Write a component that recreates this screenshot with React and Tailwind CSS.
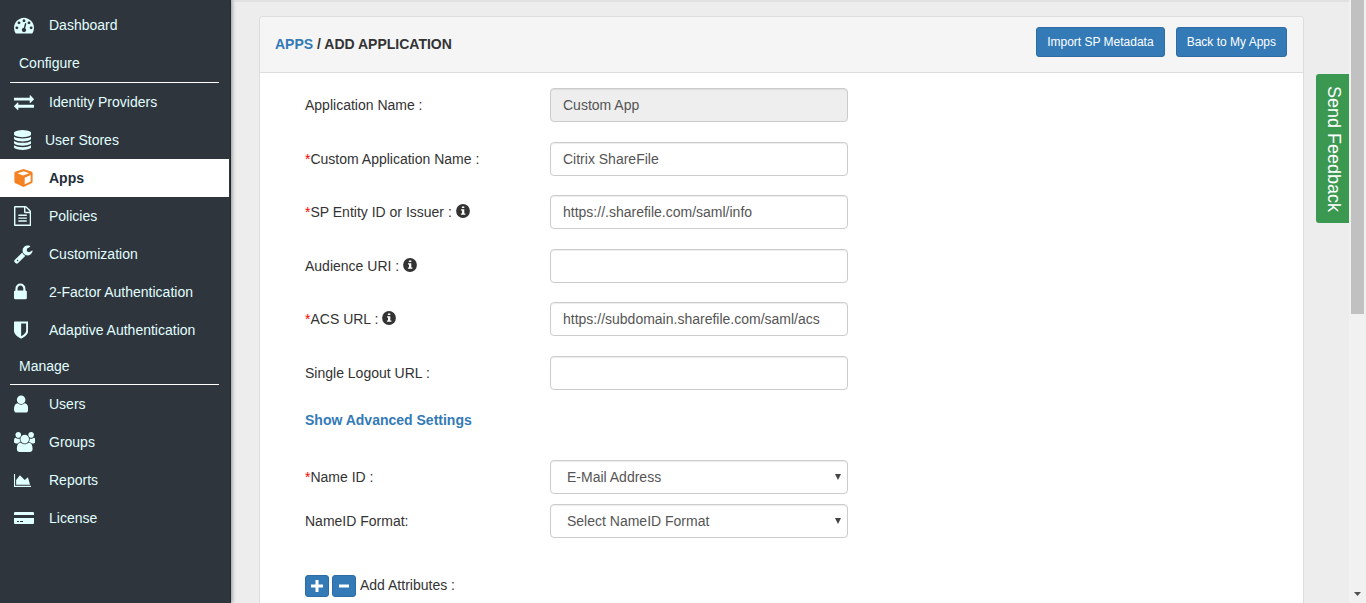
import React, { useState } from 'react';

const ICONS = {
    dashboard: {
        viewBox: '0 0 1792 1792',
        size: 'h-5',
        d: 'M384 1152q0-53-37.5-90.5t-90.5-37.5-90.5 37.5-37.5 90.5 37.5 90.5 90.5 37.5 90.5-37.5 37.5-90.5zm192-448q0-53-37.5-90.5t-90.5-37.5-90.5 37.5-37.5 90.5 37.5 90.5 90.5 37.5 90.5-37.5 37.5-90.5zm428 481l101-382q6-26-7.5-48.5t-38.5-29.5-48 6.5-30 39.5l-101 382q-60 5-107 43.5t-63 98.5q-20 77 20 146t117 89 146-20 89-117q16-60-6-117t-72-91zm660-33q0-53-37.5-90.5t-90.5-37.5-90.5 37.5-37.5 90.5 37.5 90.5 90.5 37.5 90.5-37.5 37.5-90.5zm-640-640q0-53-37.5-90.5t-90.5-37.5-90.5 37.5-37.5 90.5 37.5 90.5 90.5 37.5 90.5-37.5 37.5-90.5zm448 192q0-53-37.5-90.5t-90.5-37.5-90.5 37.5-37.5 90.5 37.5 90.5 90.5 37.5 90.5-37.5 37.5-90.5zm320 448q0 261-141 483-19 29-54 29h-1402q-35 0-54-29-141-221-141-483 0-182 71-348t191-286 286-191 348-71 348 71 286 191 191 286 71 348z'
    },
    exchange: {
        viewBox: '0 0 1792 1792',
        size: 'h-5',
        d: 'M1792 1184v192q0 13-9.5 22.5t-22.5 9.5h-1376v192q0 13-9.5 22.5t-22.5 9.5q-12 0-24-10l-319-320q-9-9-9-22 0-14 9-23l320-320q9-9 23-9 13 0 22.5 9.5t9.5 22.5v192h1376q13 0 22.5 9.5t9.5 22.5zm0-544q0 14-9 23l-320 320q-9 9-23 9-13 0-22.5-9.5t-9.5-22.5v-192h-1376q-13 0-22.5-9.5t-9.5-22.5v-192q0-13 9.5-22.5t22.5-9.5h1376v-192q0-14 9-23t23-9q12 0 24 10l319 319q9 9 9 23z'
    },
    database: {
        viewBox: '128 0 1536 1792',
        size: 'h-5',
        d: 'M896 768q237 0 443-43t325-127v170q0 69-103 128t-280 93.5-385 34.5-385-34.5-280-93.5-103-128v-170q119 84 325 127t443 43zm0 768q237 0 443-43t325-127v170q0 69-103 128t-280 93.5-385 34.5-385-34.5-280-93.5-103-128v-170q119 84 325 127t443 43zm0-384q237 0 443-43t325-127v170q0 69-103 128t-280 93.5-385 34.5-385-34.5-280-93.5-103-128v-170q119 84 325 127t443 43zm0-1152q208 0 385 34.5t280 93.5 103 128v128q0 69-103 128t-280 93.5-385 34.5-385-34.5-280-93.5-103-128v-128q0-69 103-128t280-93.5 385-34.5z'
    },
    cube: {
        viewBox: '0 0 19 18',
        size: 'h-[18px]',
        d: 'M9.5 0L17.8 2.800Q18.600 3.100 18.600 4V13Q18.600 13.700 18 14L9.500 18L1 14Q.4 13.700 .4 13V4Q.4 3.100 1.200 2.800zM3.500 4.200L9 6.600L15.300 4.200L9.800 2.200zM10.700 8.700V15.200L16.700 12.400V5.900z'
    },
    file: {
        viewBox: '128 0 1536 1792',
        size: 'h-5',
        d: 'M1596 380q28 28 48 76t20 88v1152q0 40-28 68t-68 28h-1344q-40 0-68-28t-28-68v-1600q0-40 28-68t68-28h896q40 0 88 20t76 48zm-444-244v376h376q-10-29-22-41l-313-313q-12-12-41-22zm384 1528v-1024h-416q-40 0-68-28t-28-68v-416h-768v1536h1280zm-1024-864q0-14 9-23t23-9h704q14 0 23 9t9 23v64q0 14-9 23t-23 9h-704q-14 0-23-9t-9-23v-64zm736 224q14 0 23 9t9 23v64q0 14-9 23t-23 9h-704q-14 0-23-9t-9-23v-64q0-14 9-23t23-9h704zm0 256q14 0 23 9t9 23v64q0 14-9 23t-23 9h-704q-14 0-23-9t-9-23v-64q0-14 9-23t23-9h704z'
    },
    wrench: {
        viewBox: '64 0 1664 1792',
        size: 'h-5',
        d: 'M448 1472q0-26-19-45t-45-19-45 19-19 45 19 45 45 19 45-19 19-45zm644-420l-682 682q-37 37-90 37-52 0-91-37l-106-108q-38-36-38-90 0-53 38-91l681-681q39 98 114.5 173.5t173.5 114.5zm634-435q0 39-23 106-47 134-164.5 217.5t-258.5 83.5q-185 0-316.5-131.5t-131.5-316.5 131.5-316.5 316.5-131.5q58 0 121.5 16.5t107.5 46.5q16 11 16 28t-16 28l-293 169v224l193 107q5-3 79-48.5t135.5-81 70.5-35.5q15 0 23.5 10t8.5 25z'
    },
    lock: {
        viewBox: '320 0 1152 1792',
        size: 'h-5',
        d: 'M640 768h512v-192q0-106-75-181t-181-75-181 75-75 181v192zm832 96v576q0 40-28 68t-68 28h-960q-40 0-68-28t-28-68v-576q0-40 28-68t68-28h32v-192q0-184 132-316t316-132 316 132 132 316v192h32q40 0 68 28t28 68z'
    },
    shield: {
        viewBox: '256 0 1280 1792',
        size: 'h-5',
        d: 'M1344 960v-640h-448v1137q119-63 213-137 235-184 235-360zm192-768v768q0 86-33.5 170.5t-83 150-118 127.5-126.5 103-121 77.5-89.5 49.5-42.5 20q-12 6-26 6t-26-6q-16-7-42.5-20t-89.5-49.5-121-77.5-126.5-103-118-127.5-83-150-33.5-170.5v-768q0-26 19-45t45-19h1152q26 0 45 19t19 45z'
    },
    user: {
        viewBox: '256 0 1280 1792',
        size: 'h-5',
        d: 'M1536 1399q0 109-62.5 187t-150.5 78h-854q-88 0-150.5-78t-62.5-187q0-85 8.5-160.5t31.5-152 58.5-131 94-89 134.5-34.5q131 128 313 128t313-128q76 0 134.5 34.5t94 89 58.5 131 31.5 152 8.5 160.5zm-256-887q0 159-112.5 271.5t-271.5 112.5-271.5-112.5-112.5-271.5 112.5-271.5 271.5-112.5 271.5 112.5 112.5 271.5z'
    },
    users: {
        viewBox: '0 0 1920 1792',
        size: 'h-5',
        d: 'M593 896q-162 5-265 128h-134q-82 0-138-40.5t-56-118.5q0-353 124-353 6 0 43.5 21t97.5 42.5 119 21.5q67 0 133-23-5 37-5 66 0 141 81 256zm1071 637q0 120-73 189.5t-194 69.5h-874q-121 0-194-69.5t-73-189.5q0-53 3.5-103.5t14-109 26.5-108.5 43-97.5 62-81 85.5-53.5 111.5-20q10 0 43 21.5t73 48 107 48 135 21.5 135-21.5 107-48 73-48 43-21.5q61 0 111.5 20t85.5 53.5 62 81 43 97.5 26.5 108.5 14 109 3.5 103.5zm-1024-1277q0 106-75 181t-181 75-181-75-75-181 75-181 181-75 181 75 75 181zm704 384q0 159-112.5 271.5t-271.5 112.5-271.5-112.5-112.5-271.5 112.5-271.5 271.5-112.5 271.5 112.5 112.5 271.5zm576 225q0 78-56 118.5t-138 40.5h-134q-103-123-265-128 81-115 81-256 0-29-5-66 66 23 133 23 59 0 119-21.5t97.5-42.5 43.5-21q124 0 124 353zm-128-609q0 106-75 181t-181 75-181-75-75-181 75-181 181-75 181 75 75 181z'
    },
    chart: {
        viewBox: '0 0 2048 1792',
        size: 'h-[15px]',
        d: 'M2048 1536v128h-2048v-1536h128v1408h1920zm-384-1024l256 896h-1664v-576l448-576 576 576z'
    },
    card: {
        viewBox: '0 0 20 12',
        size: 'h-3',
        d: 'M1 0h18q1 0 1 1v2h-20v-2q0-1 1-1zM0 6h20v5q0 1-1 1h-18q-1 0-1-1zM3 9v1h2v-1zM6 9v1h3v-1z'
    }
};

const NAV = [
    { label: 'Dashboard', icon: 'dashboard' },
    { heading: 'Configure', height: 'h-[39px]' },
    { label: 'Identity Providers', icon: 'exchange' },
    { label: 'User Stores', icon: 'database', slot: 'w-[31px]' },
    { label: 'Apps', icon: 'cube', active: true },
    { label: 'Policies', icon: 'file' },
    { label: 'Customization', icon: 'wrench' },
    { label: '2-Factor Authentication', icon: 'lock' },
    { label: 'Adaptive Authentication', icon: 'shield' },
    { heading: 'Manage', height: 'h-9 pb-0.5' },
    { label: 'Users', icon: 'user' },
    { label: 'Groups', icon: 'users' },
    { label: 'Reports', icon: 'chart' },
    { label: 'License', icon: 'card' }
];

const FIELDS = [
    { name: 'appName', label: 'Application Name :', disabled: true },
    { name: 'customName', label: 'Custom Application Name :', required: true },
    { name: 'entityId', label: 'SP Entity ID or Issuer :', required: true, info: true },
    { name: 'audienceUri', label: 'Audience URI :', info: true },
    { name: 'acsUrl', label: 'ACS URL :', required: true, info: true },
    { name: 'logoutUrl', label: 'Single Logout URL :' }
];

function NavIcon({ name }) {
    const icon = ICONS[name];
    return (
        <svg viewBox={icon.viewBox} className={`${icon.size} w-auto`} fill="currentColor" fillRule="evenodd" aria-hidden="true">
            <path d={icon.d} />
        </svg>
    );
}

function InfoIcon() {
    return (
        <svg viewBox="0 0 14 14" className="mb-1 ml-1 inline-block h-3.5 w-3.5 align-middle" aria-hidden="true">
            <circle cx="7" cy="7" r="6.9" fill="#333" />
            <path d="M5.9 2.4h2.4v1.700H5.900zM5 5.300h3.300v4.200h1.100v1.300H4.900V9.500H6V6.600H5z" fill="#fff" />
        </svg>
    );
}

function Sidebar() {
    return (
        <nav className="z-10 w-[231px] shrink-0 border-r border-[#222830] bg-[#2f353d] pt-1.5 shadow-[1px_0_4px_rgba(0,0,0,0.4)]">
            {NAV.map(item => item.heading ? (
                <h2
                    key={item.heading}
                    className={`mr-[11px] ml-2.5 flex items-center border-b border-white pl-[9px] text-sm text-[#e0ffff] ${item.height}`}
                >
                    {item.heading}
                </h2>
            ) : (
                <a
                    key={item.label}
                    href="#"
                    className={`mr-px flex h-[38px] items-center pl-3.5 text-sm ${item.active ? 'bg-white font-bold text-[#222d3a]' : 'text-[#e0ffff]'}`}
                >
                    <span className={`shrink-0 ${item.slot || 'w-[35px]'} ${item.active ? 'text-[#f58220]' : ''}`}>
                        <NavIcon name={item.icon} />
                    </span>
                    {item.label}
                </a>
            ))}
        </nav>
    );
}

function SelectRow({ id, label, required, option }) {
    return (
        <div className="flex items-center">
            <label htmlFor={id} className="w-[245px] shrink-0">
                {required && <span className="text-[#f00]">*</span>}{label}
            </label>
            <div className="relative w-full max-w-[298px]">
                <select
                    id={id}
                    className="h-[34px] w-full appearance-none rounded border border-[#ccc] bg-white px-4 text-[#555] shadow-[inset_0_1px_1px_rgba(0,0,0,0.075)]"
                >
                    <option>{option}</option>
                </select>
                <svg viewBox="0 0 6 6" className="pointer-events-none absolute top-3.5 right-[7px] h-1.5 w-1.5" aria-hidden="true">
                    <path d="M0 0h6l-3 6z" fill="#444" />
                </svg>
            </div>
        </div>
    );
}

function App() {
    const [formData, setFormData] = useState({
        appName: 'Custom App',
        customName: 'Citrix ShareFile',
        entityId: 'https://.sharefile.com/saml/info',
        audienceUri: '',
        acsUrl: 'https://subdomain.sharefile.com/saml/acs',
        logoutUrl: ''
    });

    const handleChange = (e) => {
        setFormData({ ...formData, [e.target.name]: e.target.value });
    };

    return (
        <div className="flex h-screen overflow-hidden bg-[#ededed] font-['Liberation_Sans',Arial,sans-serif] text-sm text-[#333]">
            <Sidebar />

            <main className="min-w-0 flex-1 border-t-2 border-[#e1e1e1] pt-3.5 pr-[45px] pl-7">
                <div className="min-h-full rounded-t border border-b-0 border-[#ddd] bg-white">
                    <div className="flex h-14 items-start justify-between rounded-t border-b border-[#ddd] bg-[#f5f5f5] pt-2.5 pr-4 pl-[15px]">
                        <h1 className="pt-[7px] font-bold">
                            <a href="#" className="text-[#337ab7]">APPS</a> / ADD APPLICATION
                        </h1>
                        <div className="flex gap-[11px] text-xs text-white">
                            <button type="button" className="h-[30px] rounded-[3px] border border-[#2e6da4] bg-[#337ab7] px-2.5">
                                Import SP Metadata
                            </button>
                            <button type="button" className="h-[30px] rounded-[3px] border border-[#2e6da4] bg-[#337ab7] px-2.5">
                                Back to My Apps
                            </button>
                        </div>
                    </div>

                    <form className="px-[45px] pt-[15px]">
                        {FIELDS.map(field => (
                            <div key={field.name} className="flex items-center odd:mb-5 even:mb-[19px]">
                                <label htmlFor={field.name} className="w-[245px] shrink-0">
                                    {field.required && <span className="text-[#f00]">*</span>}
                                    {field.label}
                                    {field.info && <InfoIcon />}
                                </label>
                                <input
                                    id={field.name}
                                    name={field.name}
                                    type="text"
                                    value={formData[field.name]}
                                    onChange={handleChange}
                                    disabled={field.disabled}
                                    className="h-[34px] w-full max-w-[298px] rounded border border-[#ccc] bg-white px-3 text-[#555] shadow-[inset_0_1px_1px_rgba(0,0,0,0.075)] disabled:bg-[#eee]"
                                />
                            </div>
                        ))}

                        <a href="#" className="inline-block pt-px font-bold text-[#337ab7]">Show Advanced Settings</a>

                        <div className="mt-[30px] flex flex-col gap-2.5">
                            <SelectRow id="nameId" label="Name ID :" required option="E-Mail Address" />
                            <SelectRow id="nameIdFormat" label="NameID Format:" option="Select NameID Format" />
                        </div>

                        <div className="mt-[37px] flex items-start">
                            <button type="button" aria-label="Add attribute" className="flex h-[22px] w-6 items-center justify-center rounded-[3px] border border-[#2e6da4] bg-[#337ab7]">
                                <svg viewBox="0 0 12 12" className="h-3 w-3" fill="#fff"><path d="M4.500 0h3v4.500H12v3H7.500V12h-3V7.500H0v-3h4.500z" /></svg>
                            </button>
                            <button type="button" aria-label="Remove attribute" className="ml-[3px] flex h-[22px] w-6 items-center justify-center rounded-[3px] border border-[#2e6da4] bg-[#337ab7]">
                                <svg viewBox="0 0 12 12" className="h-3 w-3" fill="#fff"><path d="M1 4.500h10v3H1z" /></svg>
                            </button>
                            <span className="ml-1">Add Attributes :</span>
                        </div>
                    </form>
                </div>
            </main>

            <button
                type="button"
                className="fixed top-[74px] right-[17px] flex h-[149px] w-[33px] items-center justify-center rounded-l-[3px] bg-[#3a9850] pt-0.5 pl-0.5 text-lg text-white [writing-mode:vertical-rl]"
            >
                Send Feedback
            </button>

            {/* page scrollbar */}
            <div className="flex w-[17px] shrink-0 flex-col items-center justify-between bg-[#f1f1f1]" aria-hidden="true">
                <div className="h-[314px] w-[13px] bg-[#c1c1c1]"></div>
                <svg viewBox="0 0 7 4" className="mb-[7px] h-1 w-[7px]"><path d="M0 0h7L3.500 4z" fill="#505050" /></svg>
            </div>
        </div>
    );
}

export default App;
